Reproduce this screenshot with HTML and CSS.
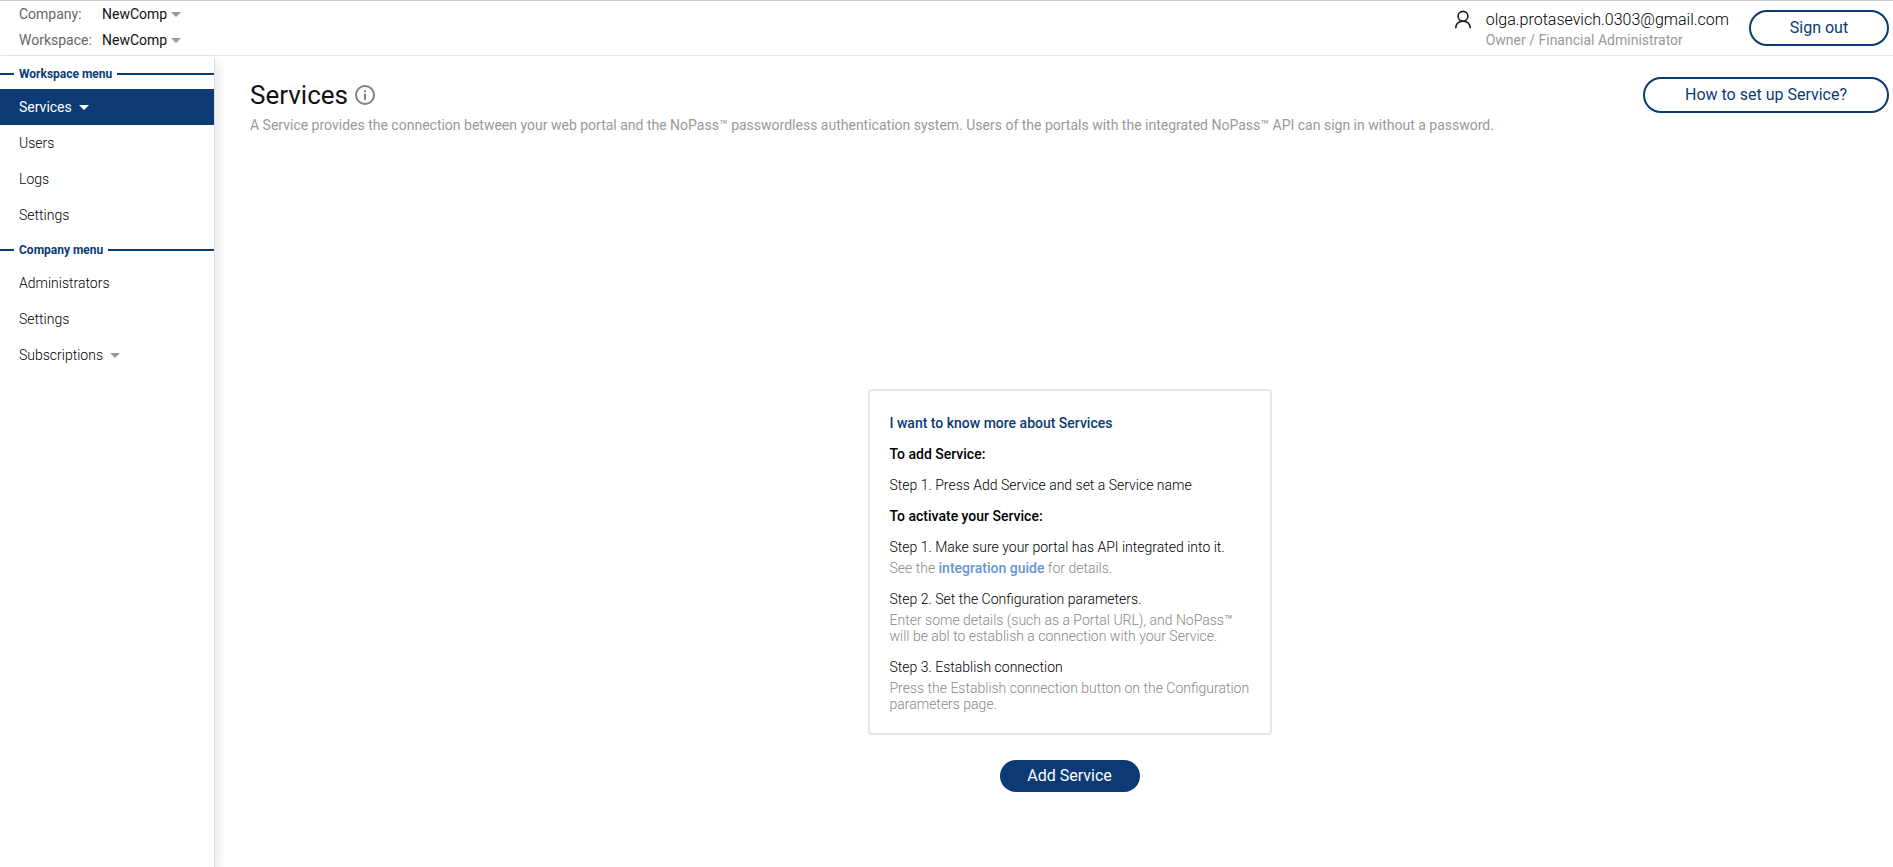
FILE: index.html
```html
<!DOCTYPE html>
<html lang="en">
<head>
<meta charset="utf-8">
<title>Services</title>
<link rel="stylesheet" href="styles.css">
</head>
<body>
<header class="topbar">
  <div class="scope">
    <label for="company">Company:</label>
    <span class="picker"><select id="company"><option>NewComp</option></select></span>
    <label for="workspace">Workspace:</label>
    <span class="picker"><select id="workspace"><option>NewComp</option></select></span>
  </div>
  <div class="account">
    <svg class="account-icon" width="18" height="20" viewBox="0 0 18 20" fill="none" stroke="#1a1a1a" stroke-width="1.6" aria-hidden="true">
      <circle cx="9" cy="6.3" r="4.9"/>
      <path d="M1.700 18.200c.2-4.300 3-7 7.300-7s7.100 2.700 7.300 7"/>
    </svg>
    <div class="account-text">
      <span class="email">olga.protasevich.0303@gmail.com</span>
      <span class="role">Owner / Financial Administrator</span>
    </div>
    <button type="button" class="btn btn-outline btn-signout">Sign out</button>
  </div>
</header>
<div class="layout">
  <nav class="sidebar">
    <h2 class="menu-title">Workspace menu</h2>
    <ul class="menu">
      <li><a class="menu-item active" href="#">Services<span class="caret"></span></a></li>
      <li><a class="menu-item" href="#">Users</a></li>
      <li><a class="menu-item" href="#">Logs</a></li>
      <li><a class="menu-item" href="#">Settings</a></li>
    </ul>
    <h2 class="menu-title">Company menu</h2>
    <ul class="menu">
      <li><a class="menu-item" href="#">Administrators</a></li>
      <li><a class="menu-item" href="#">Settings</a></li>
      <li><a class="menu-item" href="#">Subscriptions<span class="caret"></span></a></li>
    </ul>
  </nav>
  <main class="content">
    <div class="page-head">
      <div>
        <h1 class="page-title">Services
          <svg width="20" height="20" viewBox="0 0 20 20" fill="none" stroke="#808080" stroke-width="2" aria-hidden="true">
            <circle cx="10" cy="10" r="9"/>
            <path d="M10 8.800v6M10 5.200v2"/>
          </svg>
        </h1>
        <p class="page-text">A Service provides the connection between your web portal and the NoPass™ passwordless authentication system. Users of the portals with the integrated NoPass™ API can sign in without a password.</p>
      </div>
      <button type="button" class="btn btn-outline btn-help">How to set up Service?</button>
    </div>
    <div class="empty">
      <section class="card">
        <h2 class="card-title">I want to know more about Services</h2>
        <h3 class="card-sub">To add Service:</h3>
        <p>Step 1. Press Add Service and set a Service name</p>
        <h3 class="card-sub">To activate your Service:</h3>
        <div class="step">
          <p>Step 1. Make sure your portal has API integrated into it.</p>
          <p class="note">See the <a href="#">integration guide</a> for details.</p>
        </div>
        <div class="step">
          <p>Step 2. Set the Configuration parameters.</p>
          <p class="note">Enter some details (such as a Portal URL), and NoPass™ will be abl to establish a connection with your Service.</p>
        </div>
        <div class="step">
          <p>Step 3. Establish connection</p>
          <p class="note">Press the Establish connection button on the Configuration parameters page.</p>
        </div>
      </section>
      <button type="button" class="btn btn-primary">Add Service</button>
    </div>
  </main>
</div>
</body>
</html>
```
FILE: styles.css
```css
* { box-sizing: border-box; }
body {
  margin: 0;
  min-height: 100vh;
  display: flex;
  flex-direction: column;
  background: #fff;
  color: #000;
  font: 300 14px/16px Roboto, sans-serif;
}
h1, h2, h3, p, ul { margin: 0; padding: 0; }
ul { list-style: none; }
a { text-decoration: none; }

.topbar {
  display: flex;
  justify-content: space-between;
  padding: 0 4px 2px 19px;
  border-top: 1px solid #ccc;
  border-bottom: 1px solid #e4e4e4;
}
.scope {
  display: grid;
  grid-template-columns: 83px auto;
  line-height: 26px;
  font-weight: 400;
}
.scope label { color: #666; }
.picker { display: flex; align-items: center; }
.picker select {
  appearance: none;
  border: 0;
  margin: 0;
  padding: 0;
  background: none;
  color: #111;
  font: inherit;
}
.picker::after, .caret {
  content: "";
  border: 5px solid transparent;
  border-top-color: #999;
  border-bottom: 0;
}
.picker::after { margin-left: 3px; }

.account { display: flex; align-items: center; padding-top: 2px; }
.account-icon { align-self: flex-start; margin: 7px 14px 0 0; }
.account-text { display: flex; flex-direction: column; margin-right: 20px; padding-top: 4px; }
.email { font-size: 16px; line-height: 20px; }
.role { line-height: 20px; font-weight: 400; color: #999; }

.btn {
  border-radius: 18px;
  font: 400 16px/20px Roboto, sans-serif;
  cursor: pointer;
}
.btn-outline {
  flex: none;
  height: 36px;
  border: 2px solid #0b3a75;
  background: #fff;
  color: #0b3a75;
}
.btn-signout { width: 140px; }
.btn-help { width: 246px; }
.btn-primary {
  width: 140px;
  height: 32px;
  border: 0;
  background: #0b3a75;
  color: #fff;
}

.layout { flex: 1; display: flex; }
.sidebar {
  flex: none;
  width: 214px;
  padding-top: 1px;
  box-shadow: 1px 2px 0 #e0e0e0, 4px 6px 10px rgba(0, 0, 0, 0.1);
}
.menu-title {
  display: flex;
  align-items: center;
  gap: 5px;
  height: 32px;
  padding-top: 2px;
  color: #0b3a75;
  font-size: 12px;
  font-weight: 700;
}
.menu-title::before, .menu-title::after { content: ""; height: 2px; background: #0b3a75; }
.menu-title::before { width: 14px; }
.menu-title::after { flex: 1; }
.menu-item {
  display: flex;
  align-items: center;
  gap: 7px;
  height: 36px;
  padding-left: 19px;
  color: #000;
}
.menu-item.active { background: #0b3a75; color: #fff; font-weight: 400; }
.active .caret { border-top-color: #fff; }

.content {
  flex: 1;
  display: flex;
  flex-direction: column;
  padding: 21px 4px 0 36px;
}
.page-head { display: flex; justify-content: space-between; gap: 20px; }
.page-title {
  display: flex;
  align-items: center;
  gap: 7px;
  margin-bottom: 4px;
  font-size: 26px;
  line-height: 36px;
  font-weight: 400;
  color: #111;
}
.page-text { color: #999; font-weight: 400; }
.empty {
  flex: 1;
  display: flex;
  flex-direction: column;
  align-items: center;
  justify-content: center;
  gap: 25px;
  padding-top: 180px;
}
.card {
  display: flex;
  flex-direction: column;
  gap: 15px;
  width: 404px;
  padding: 24px 20px 21px;
  border: 2px solid #e6e6e6;
  border-radius: 4px;
}
.card-title, .card-sub { font-size: 14px; font-weight: 500; }
.card-title { color: #0b3a75; }
.step { display: flex; flex-direction: column; gap: 5px; }
.note { color: #888; }
.note a { color: #6495d2; font-weight: 500; }
```
